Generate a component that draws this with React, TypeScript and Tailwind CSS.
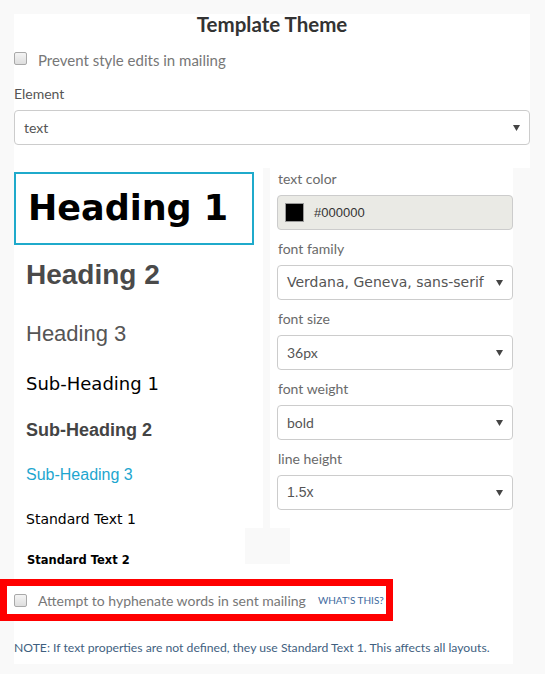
import React from "react";

const uiFont = "font-['Lato','Open_Sans',sans-serif]";
const verdana = "font-['DejaVu_Sans','Verdana',sans-serif]";
const arial = "font-['Liberation_Sans','Arial',sans-serif]";

function Caret() {
  return (
    <svg width="7" height="6" viewBox="0 0 7 6" className="shrink-0">
      <path d="M0 0 H7 L3.5 6 Z" fill="#444" />
    </svg>
  );
}

function Checkbox() {
  return (
    <span className="block h-[13px] w-[13px] shrink-0 rounded-[2px] border border-[#a9a9a9] bg-gradient-to-b from-[#f4f4f4] to-[#dedede]" />
  );
}

function SelectBox({ value, className = "" }: { value: string; className?: string }) {
  return (
    <div className="flex h-[35px] items-center justify-between rounded-[4px] border border-[#cccccc] bg-white pl-[9px] pr-[9px]">
      <span className={`text-[14px] text-[#555] ${className}`}>{value}</span>
      <Caret />
    </div>
  );
}

function Field({ label, children }: { label: string; children: React.ReactNode }) {
  return (
    <div className="mb-[9px]">
      <div className="mb-[6px] h-[20px] pl-[1px] text-[14px] leading-[20px] text-[#6a6a6a]">{label}</div>
      {children}
    </div>
  );
}

export default function App() {
  return (
    <div className={`min-h-[674px] w-[545px] bg-[#f9f9f9] pt-[15px] ${uiFont}`}>
      {/* top panel */}
      <div className="ml-[14px] w-[516px] bg-white">
        <h1 className="-mt-[1px] h-[20px] text-center text-[20.5px] font-bold leading-[20px] text-[#333]">
          Template Theme
        </h1>
        <div className="mt-[16px] flex h-[16px] items-center gap-[11px]">
          <Checkbox />
          <span className="mt-[4px] text-[15px] text-[#777]">Prevent style edits in mailing</span>
        </div>
        <div className="mt-[18px] h-[20px] text-[14px] leading-[20px] text-[#555]">Element</div>
        <div className="mt-[6px]">
          <SelectBox value="text" />
        </div>
        <div className="h-[23px]" />
      </div>

      {/* style editor */}
      <div className="ml-[14px] flex w-[499px] bg-white">
        <div className="w-[249px] bg-white">
          <div className="mt-[4px] flex h-[73px] w-[240px] items-center border-2 border-[#1faacb] pl-[12px]">
            <span className={`${verdana} text-[35px] font-bold leading-none text-black`}>Heading 1</span>
          </div>
          <div className={`flex h-[60px] items-center pl-[12px] ${arial} text-[28px] font-bold text-[#4a4a4a]`}>
            Heading 2
          </div>
          <div className={`flex h-[56px] items-center pl-[12px] ${arial} text-[22px] text-[#555]`}>
            Heading 3
          </div>
          <div className={`flex h-[44px] items-center pl-[12px] ${verdana} text-[18px] text-black`}>
            Sub-Heading 1
          </div>
          <div className={`flex h-[50px] items-center pl-[12px] ${arial} text-[18px] font-bold text-[#444]`}>
            Sub-Heading 2
          </div>
          <div className={`flex h-[40px] items-center pl-[12px] ${arial} text-[16px] text-[#1ea6cf]`}>
            Sub-Heading 3
          </div>
          <div className={`flex h-[48px] items-center pl-[12px] ${verdana} text-[14px] text-black`}>
            Standard Text 1
          </div>
          <div className={`flex h-[36px] items-center pl-[13px] ${verdana} text-[11.5px] font-bold text-black`}>
            Standard Text 2
          </div>
        </div>

        <div className="flex w-[250px] flex-col bg-white">
          <div className="flex h-[360px]">
            <div className="w-[7px] bg-[#f9f9f9]" />
            <div className="w-[243px] bg-white pl-[7px] pt-[1px]">
              <Field label="text color">
                <div className="flex h-[35px] items-center gap-[10px] rounded-[4px] border border-[#cccccc] bg-[#eaeae5] pl-[7px]">
                  <span className="block h-[19px] w-[19px] border border-[#999] bg-black" />
                  <span className={`${arial} text-[13px] text-[#333]`}>#000000</span>
                </div>
              </Field>
              <Field label="font family">
                <SelectBox value="Verdana, Geneva, sans-serif" className={`${verdana} text-[13.5px]`} />
              </Field>
              <Field label="font size">
                <SelectBox value="36px" />
              </Field>
              <Field label="font weight">
                <SelectBox value="bold" />
              </Field>
              <Field label="line height">
                <SelectBox value="1.5x" className={arial} />
              </Field>
            </div>
          </div>
          <div className="-ml-[18px] h-[36px] w-[45px] bg-[#f9f9f9]" />
        </div>
      </div>

      {/* footer */}
      <div className="ml-[14px] w-[499px] bg-white">
        <div className="-ml-[14px] flex h-[42px] w-[393px] items-center whitespace-nowrap border-[7px] border-[#ff0000] bg-white pl-[7px]">
          <Checkbox />
          <span className="ml-[11px] text-[14px] text-[#777]">Attempt to hyphenate words in sent mailing</span>
          <span className="ml-[12px] text-[10px] uppercase text-[#3e6a9e]">What's this?</span>
        </div>
        <div className="h-[43px] pt-[19px] text-[12.2px] leading-[16px] text-[#3f5f7f]">
          NOTE: If text properties are not defined, they use Standard Text 1. This affects all layouts.
        </div>
      </div>
    </div>
  );
}
